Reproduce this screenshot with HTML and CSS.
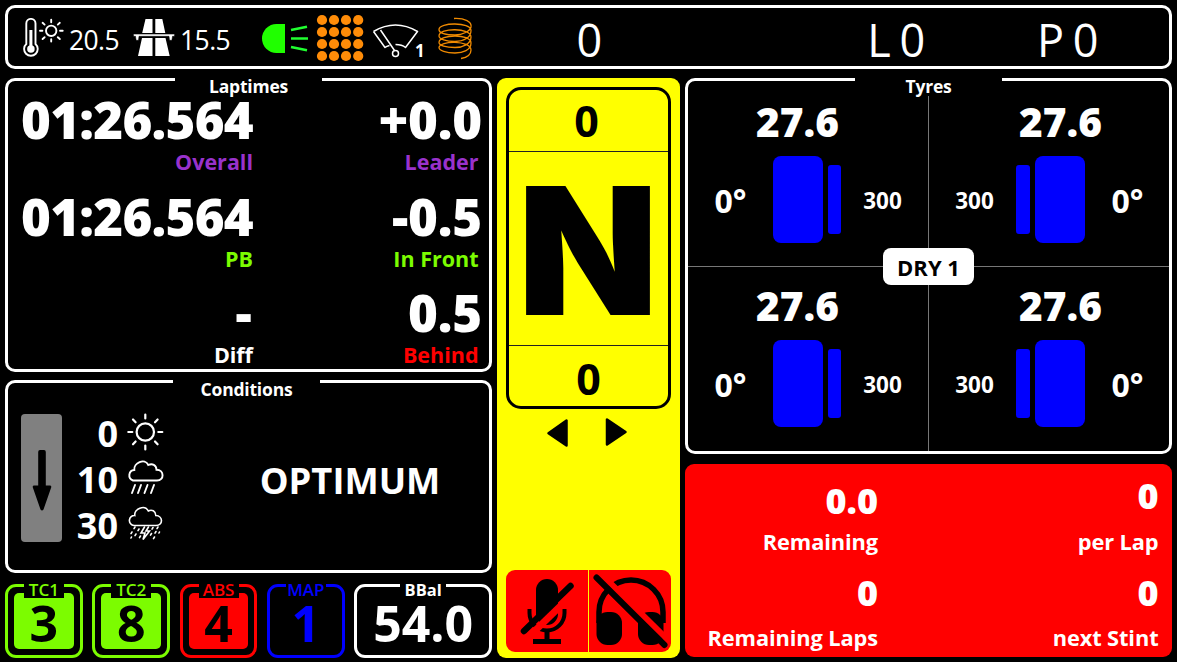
FILE: index.html
```html
<!DOCTYPE html>
<html lang="en">
<head>
<meta charset="utf-8">
<title>Race dashboard</title>
<link rel="stylesheet" href="styles.css">
</head>
<body>
<div class="dash">
  <header class="status">
    <div class="weather">
      <svg class="ic-temp" width="44" height="40" viewBox="22 17 44 40" fill="none" stroke="#fff" stroke-width="1.9">
        <path d="M26.300 43V22.500a4.600 4.600 0 0 1 9.200 0V43a6.800 6.800 0 1 1-9.200 0Z"/>
        <path d="M30.900 29V46" stroke-width="3"/><circle cx="30.900" cy="48" r="2.800" fill="#fff"/>
        <circle cx="51.200" cy="29.800" r="5.200"/>
        <path stroke-linecap="round" d="M51.200 18.800v2.500M51.200 38.300v2.300M40 29.800h2.400M60 29.800h2.700M42.600 21.800l2 1.800M57.800 36.200l2 1.800M59.800 21.800l-2 1.800M44.600 36.200l-2 1.800"/>
      </svg>
      <span class="temp">20.5</span>
      <svg class="ic-road" width="42" height="40" viewBox="133 17 42 40" fill="#fff">
        <path d="M145.500 18h7v14h-10.300ZM155.300 18h7l3 14h-10ZM142 37h10.500v18h-14.500ZM155.300 37h10.200l4.200 18h-14.400Z"/>
        <path d="M133.500 33.100h41v2.200h-2l-.6 4h-2.400l-.5-4h-30l-.5 4h-2.400l-.6-4h-2Z" stroke="#000" stroke-width=".5"/>
      </svg>
      <span class="temp">15.5</span>
    </div>
    <div class="systems">
      <svg width="48" height="40" viewBox="261 17 48 40">
        <path d="M285 22v29h-8.500a14.500 14.500 0 0 1 0-29Z" fill="#20ff00"/>
        <path d="M291 28l16-3.300M291 36.500h17M291 45l16 3.300" stroke="#20ff30" stroke-width="2.600"/>
      </svg>
      <svg class="ic-grid" width="48" height="48" viewBox="0 0 48 48" fill="#ff8c08">
        <g id="dots"><circle cx="6" cy="6" r="5.100"/><circle cx="18" cy="6" r="5.100"/><circle cx="30" cy="6" r="5.100"/><circle cx="42.200" cy="6" r="5.100"/></g>
        <use href="#dots" y="12"/><use href="#dots" y="24"/><use href="#dots" y="36"/>
      </svg>
      <div class="wiper">
        <svg width="47" height="36" viewBox="372 21 47 36" fill="none" stroke="#fff" stroke-width="1.500" stroke-linejoin="round">
          <path d="M373.500 29.500Q395.500 16.500 417.500 29.500L405.500 45.500Q402 42.500 395.500 42.500M389.500 43.500Q386.500 44.200 385 45.500L373.500 29.500M380.500 28L394.500 48.500"/>
          <circle cx="395.500" cy="51.500" r="3"/>
        </svg>
        <span class="wiper-level">1</span>
      </div>
      <svg class="ic-spring" width="36" height="44" viewBox="437 15 36 44" fill="none" stroke="#f08a00" stroke-width="1.300">
        <path d="M454 16.500C465 16 472 20 471 25C470 29 463 33 455 33C446 33 439 31 439 27.500C439 20 471 20 471 28.500C471 36 463 39.500 455 39.500C446 39.500 439 37 439 34C439 25.500 471 25.500 471 35C471 42 463 45.500 455 45.500C446 45.500 439 43.500 439 40.500C439 32 471 31.500 471 41C471 48 463 51 455 51C446 51 439 48.500 439 45.500C439 38.500 471 38 471 48C471 53 467 55.500 461 56.500"/>
      </svg>
    </div>
    <span class="stat stat-speed">0</span>
    <span class="stat stat-lap">L 0</span>
    <span class="stat stat-pos">P 0</span>
  </header>

  <main class="columns">
    <div class="col-left">
      <section class="panel laptimes">
        <h2 class="title">Laptimes</h2>
        <div class="time-row">
          <div class="entry"><b>01:26.564</b><i class="purple">Overall</i></div>
          <div class="entry gap-entry"><b>+0.0</b><i class="purple">Leader</i></div>
        </div>
        <div class="time-row">
          <div class="entry"><b>01:26.564</b><i class="green">PB</i></div>
          <div class="entry gap-entry"><b>-0.5</b><i class="green">In Front</i></div>
        </div>
        <div class="time-row">
          <div class="entry"><b class="dash-value">-</b><i>Diff</i></div>
          <div class="entry gap-entry"><b>0.5</b><i class="red">Behind</i></div>
        </div>
      </section>

      <section class="panel conditions">
        <h2 class="title">Conditions</h2>
        <div class="trend">
          <svg width="20" height="62" viewBox="0 0 20 62"><path d="M8 0h4q1.800 0 1.800 2v33.500h4q2.200 0 1.200 2.500l-7.500 21.500q-1.500 2-3 0L1 38q-1-2.500 1.200-2.500h4V2q0-2 1.800-2Z"/></svg>
        </div>
        <div class="forecast">
          <span>0</span>
          <svg width="38" height="40" viewBox="126 412 38 40" fill="none" stroke="#fff" stroke-width="2.200" stroke-linecap="round">
            <circle cx="145.300" cy="432" r="8.700"/>
            <path d="M145.300 414.500v4M145.300 445.500v4M128.300 432h4M158.300 432h4M133 419.500l2.600 2.800M155 441.500l2.600 2.800M157.600 419.500l-2.600 2.800M135.600 441.500l-2.600 2.800"/>
          </svg>
          <span>10</span>
          <svg width="38" height="40" viewBox="126 459 38 40" fill="none" stroke="#fff" stroke-width="1.900" stroke-linecap="round">
            <path d="M133 481.500a5.400 5.400 0 0 1 1.300-10.500c-1-7 10.500-12.500 14-5c4-2 8 0 8.200 4.800c8 0 8 10.700 .5 10.700Z"/>
            <path d="M135 486l-3 8M141 486l-3 8M147.500 486l-3 8M154 486l-3 8"/>
          </svg>
          <span>30</span>
          <svg width="38" height="40" viewBox="126 505 38 40" fill="none" stroke="#fff" stroke-width="1.600" stroke-linecap="round">
            <path d="M134 526.500a5 5 0 0 1 .8-10c-1-6.500 10-11.500 13.500-4.500c3.500-2 7.300 0 7.500 4.500c7.500 .3 7.500 10 .2 10Z"/>
            <path d="M144.500 528l-3.500 6h4l-2 6.500l6.500-8.500h-3.500l2.500-4M135 528l-1 1.600M132 533l-1 1.600M139 530l-1 1.600M136 535l-1 1.600M131.500 538l-.5 1M140.500 537l-1 1.600M153 528.500l-1 1.600M158 528l-1 1.600M156 532.500l-1 1.600M151.500 534.500l-1 1.600M159.500 533l-.5 1M154.500 538l-1 1.600"/>
          </svg>
        </div>
        <div class="grip">OPTIMUM</div>
      </section>

      <section class="tiles">
        <div class="tile green"><span class="tag">TC1</span><span class="fill">3</span></div>
        <div class="tile green"><span class="tag">TC2</span><span class="fill">8</span></div>
        <div class="tile red"><span class="tag">ABS</span><span class="fill">4</span></div>
        <div class="tile blue"><span class="tag">MAP</span><span class="plain">1</span></div>
        <div class="tile wide"><span class="tag">BBal</span><span class="plain">54.0</span></div>
      </section>
    </div>

    <section class="gear-col">
      <div class="gear-box">
        <div class="gear-num">0</div>
        <div class="gear"><span>N</span></div>
        <div class="gear-num low">0</div>
      </div>
      <svg class="indicators" width="82" height="30" viewBox="546 417 82 30">
        <path d="M548.500 433.300L566.500 420.500V445.500ZM625.500 432L607 419.500V444.500Z" stroke="#000" stroke-width="2.500" stroke-linejoin="round"/>
      </svg>
      <div class="audio">
        <svg width="82" height="82" viewBox="506 570 82 82">
          <rect x="536" y="579" width="22" height="46" rx="11"/>
          <path d="M529.500 609v4a17.500 17.500 0 0 0 35 0v-4" fill="none" stroke="#000" stroke-width="4"/>
          <path d="M544.500 630h5v9h11.500v5h-28v-5h11.500Z"/>
          <path d="M529 636.500L578 589" stroke="#f00" stroke-width="7"/>
          <path d="M524 631L570.500 586" stroke="#000" stroke-width="6.500" stroke-linecap="round"/>
        </svg>
        <svg width="82" height="82" viewBox="589 570 82 82">
          <path d="M599 623v-11a32 32 0 0 1 64 0v11" fill="none" stroke="#000" stroke-width="5.500"/>
          <rect x="596.500" y="612" width="25.500" height="33" rx="11"/><rect x="638" y="612" width="25.500" height="33" rx="11"/>
          <path d="M600.500 573.500L671 643" stroke="#f00" stroke-width="6"/>
          <path d="M596.500 577.500L664.500 645" stroke="#000" stroke-width="6" stroke-linecap="round"/>
        </svg>
      </div>
    </section>

    <div class="col-right">
      <section class="panel tyres">
        <h2 class="title">Tyres</h2>
        <div class="wheel">
          <b class="pressure">27.6</b>
          <div class="wheel-row"><span class="camber">0°</span><span class="tyre"></span><span class="brake"></span><span class="heat">300</span></div>
        </div>
        <div class="wheel right">
          <b class="pressure">27.6</b>
          <div class="wheel-row"><span class="camber">0°</span><span class="tyre"></span><span class="brake"></span><span class="heat">300</span></div>
        </div>
        <div class="wheel">
          <b class="pressure">27.6</b>
          <div class="wheel-row"><span class="camber">0°</span><span class="tyre"></span><span class="brake"></span><span class="heat">300</span></div>
        </div>
        <div class="wheel right">
          <b class="pressure">27.6</b>
          <div class="wheel-row"><span class="camber">0°</span><span class="tyre"></span><span class="brake"></span><span class="heat">300</span></div>
        </div>
        <div class="compound">DRY 1</div>
      </section>
      <section class="fuel">
        <div class="fuel-cell"><b>0.0</b><i>Remaining</i></div>
        <div class="fuel-cell lifted"><b>0</b><i>per Lap</i></div>
        <div class="fuel-cell second"><b>0</b><i>Remaining Laps</i></div>
        <div class="fuel-cell second"><b>0</b><i>next Stint</i></div>
      </section>
    </div>
  </main>
</div>
</body>
</html>
```
FILE: styles.css
```css
* { box-sizing: border-box; margin: 0; }
body { background: #000; color: #fff; font-family: "Open Sans", "Noto Sans", sans-serif; font-weight: 700; overflow: hidden; }
svg { display: block; flex: none; }
i { font-style: normal; }
.dash { width: 1177px; height: 662px; padding: 5px 5px 5px; display: flex; flex-direction: column; gap: 9px; }

/* status bar */
.status { height: 64px; width: 1167px; border: 3px solid #fff; border-radius: 10px; display: grid; grid-template-columns: 253px 278px 99px 344px 174px; align-items: center; font-weight: 400; }
.weather { display: flex; align-items: center; padding-left: 14px; }
.weather svg { margin-top: -1px; }
.temp { font-size: 26.5px; line-height: 56px; letter-spacing: -.6px; padding-top: 2px; }
.ic-temp { margin-right: 3px; }
.ic-road { margin: 0 5px 0 14px; }
.systems { display: flex; align-items: center; }
.ic-grid { margin-left: 7px; margin-top: -1px; }
.wiper { display: flex; margin-left: 8px; margin-top: 4px; position: relative; }
.wiper-level { font-size: 17px; line-height: 20px; font-weight: 700; position: absolute; left: 43px; top: 18px; }
.ic-spring { margin-left: 18px; }
.stat { font-size: 45px; line-height: 58px; text-align: center; letter-spacing: -1.5px; padding-top: 3px; }
.stat-lap { padding-left: 171px; }
.stat-pos { padding-right: 4px; }

/* three main columns */
.columns { display: grid; grid-template-columns: 487px 183px 487px; column-gap: 5px; height: 579px; }
.col-left { display: flex; flex-direction: column; }
.panel { border: 3px solid #fff; border-radius: 10px; position: relative; }
.title { position: absolute; top: -7px; left: 50%; width: 147px; margin-left: -73.5px; background: linear-gradient(#000, #000) 0 4px / 100% 6px no-repeat; font-size: 17.5px; line-height: 24px; text-align: center; letter-spacing: -.2px; }

.laptimes { height: 294px; padding: 16px 7px 0 14px; }
.time-row { height: 96.7px; display: grid; grid-template-columns: 231px 1fr; }
.entry { display: flex; flex-direction: column; align-items: flex-end; }
.entry b { font-size: 51px; line-height: 44px; letter-spacing: -.75px; }
.gap-entry b { letter-spacing: -.2px; }
.entry .dash-value { padding-right: 2px; }
.entry i { font-size: 21.5px; line-height: 28px; margin-top: 7px; }
.gap-entry i { padding-right: 3.5px; }
i.purple { color: #9932cc; }
i.green { color: #7cfc00; }
i.red { color: #f00; }

.conditions { height: 193px; margin-top: 8px; display: flex; padding: 31px 0 0 13px; }
.conditions .title { margin-left: -75.500px; line-height: 26px; }
.trend { width: 41px; height: 128px; background: #808080; border-radius: 4px; display: flex; justify-content: center; padding-top: 36px; }
.forecast { display: grid; grid-template-columns: 45px 38px; grid-auto-rows: 46px; column-gap: 8px; margin: -5px 0 0 11px; align-items: center; }
.forecast span { font-size: 36px; line-height: 46px; text-align: right; padding-top: 2px; height: 46px; }
.grip { margin-left: 71px; width: 230px; text-align: center; font-size: 36.3px; line-height: 132px; }

.tiles { display: flex; gap: 9.500px; margin-top: 11px; }
.tile { width: 78px; height: 74px; border: 3px solid currentColor; border-radius: 11px; position: relative; padding: 6px; }
.tile.green { color: #7cfc00; }
.tile.red { color: #f00; }
.tile.blue { color: #00f; }
.tile.wide { width: 138px; }
.tag { position: absolute; top: -3px; left: 50%; transform: translateX(-50%); background: #000; font-size: 17px; line-height: 12px; height: 14px; width: 40px; text-align: center; font-weight: 600; }
.wide .tag { width: 46px; font-weight: 700; font-size: 16.5px; }
.fill, .plain { display: block; height: 56px; font-size: 50px; line-height: 60px; text-align: center; border-radius: 5px; }
.fill { background: currentColor; -webkit-text-fill-color: #000; }

/* gear column */
.gear-col { background: #ff0; border-radius: 9px; color: #000; padding: 9px; display: flex; flex-direction: column; align-items: center; }
.gear-box { width: 165px; height: 322px; border: 3px solid #000; border-radius: 15px; display: grid; grid-template-rows: 61px 195px 60px; }
.gear-num { font-size: 43px; line-height: 62px; text-align: center; padding-right: 4px; }
.gear-num.low { line-height: 66px; padding-right: 0; }
.gear { border-top: 1px solid #222; border-bottom: 1px solid #222; font-family: Inter, sans-serif; font-weight: 900; font-size: 177px; line-height: 198px; height: 195px; text-align: center; }
.gear span { display: inline-block; transform: scaleX(1.035); }
.indicators { margin: 8px 4px 0 0; }
.audio { margin-top: auto; margin-bottom: -3px; width: 165px; height: 82px; background: linear-gradient(#ff0, #ff0) 82px 0 / 1px 100% no-repeat #f00; border-radius: 9px; display: flex; justify-content: space-between; overflow: hidden; }

/* tyres */
.tyres { height: 376px; width: 487px; display: grid; grid-template: 184px 184px / 240px 242px; background: linear-gradient(#777, #777) 240px 15px / 1px 100% no-repeat, linear-gradient(#777, #777) 0 185px / 100% 1px no-repeat; }
.wheel { display: flex; flex-direction: column; align-items: flex-start; padding-top: 17px; }
.wheel.right { align-items: flex-end; }
.pressure { font-size: 40.5px; line-height: 48px; width: 219px; text-align: center; }
.wheel-row { display: flex; align-items: center; margin-top: 10px; }
.right .wheel-row { flex-direction: row-reverse; }
.camber { width: 85px; font-size: 32px; line-height: 87px; text-align: center; padding-top: 1px; height: 87px; }
.tyre { width: 50px; height: 87px; border-radius: 8px; background: #00f; }
.brake { width: 13px; height: 69px; border-radius: 3px; background: #00f; margin: 0 0 0 5px; }
.right .brake { width: 14px; margin: 0 5px 0 0; }
.heat { width: 83px; font-size: 22.500px; text-align: center; padding-top: 2px; }
.compound { position: absolute; left: 195px; top: 167px; width: 91px; height: 37px; border-radius: 8px; background: #fff; color: #000; font-size: 22px; line-height: 39px; text-align: center; }

/* fuel */
.fuel { height: 193px; margin-top: 10px; background: #f00; border-radius: 9px; display: grid; grid-template: 96px 96px / 193px 280.500px; padding-top: 15px; }
.fuel-cell { display: flex; flex-direction: column; align-items: flex-end; }
.fuel-cell b { font-size: 36px; line-height: 44px; }
.fuel-cell i { font-size: 21.8px; line-height: 30px; margin-top: 4px; letter-spacing: -.1px; }
.lifted b { margin-top: -5px; margin-bottom: 5px; }
.second b { margin-top: -4px; margin-bottom: 4px; }
```
